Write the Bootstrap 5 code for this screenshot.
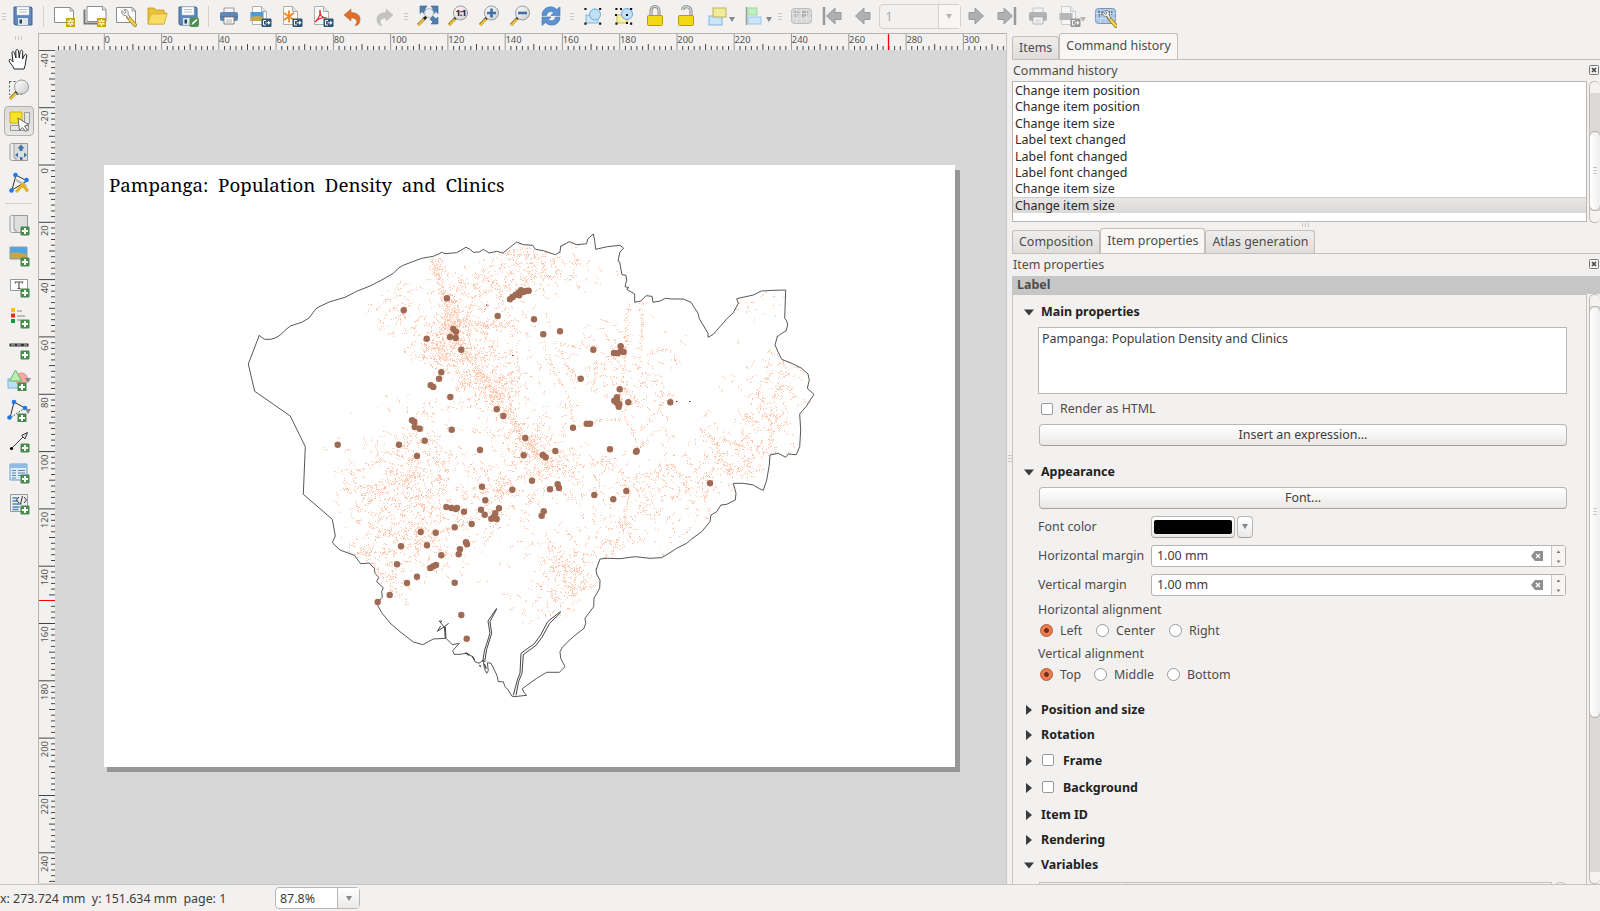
<!DOCTYPE html>
<html lang="en">
<head>
<meta charset="utf-8">
<title>Composer</title>
<link href="https://cdn.jsdelivr.net/npm/bootstrap@5.3.0/dist/css/bootstrap.min.css" rel="stylesheet">
<style>
body{font-family:"Noto Sans","Open Sans",sans-serif;font-size:12.45px;line-height:16px;color:#4c4c4c;background:#f2f1f0;width:1600px;height:911px;overflow:hidden}
svg{display:block;flex:none}
.topbar{height:33px}
.slot{width:31px;height:33px;flex:none;display:flex;align-items:center;justify-content:center}
.topbar .slot{padding-bottom:1px}
.off{opacity:.55;filter:grayscale(1)}
.vsep{width:10px;flex:none;display:flex;justify-content:center}
.vsep::after{content:"";width:1px;height:21px;background:#d2d0ce}
.grip{flex:none;display:flex;align-items:center;justify-content:center}
.grip::after{content:"";width:4px;height:8px;background:repeating-linear-gradient(#c9c7c5 0 1px,transparent 1px 3px)}
.grip.across::after{width:8px;height:4px;background:repeating-linear-gradient(90deg,#c9c7c5 0 1px,transparent 1px 3px)}
.tri{width:0;height:0;border:3.5px solid transparent;border-top:5px solid #888;border-bottom:0;flex:none}
.pagebox{width:82px;height:25px;border:1px solid #d2d0ce;border-radius:4px;color:#a9a7a5;flex:none}
.pagebox .dd{width:22px;border-left:1px solid #d2d0ce;background:#f7f6f5}
.sidebar{width:38px}
.sidebar .slot{width:37px;height:31px}
.sidebar .picked{width:30px;height:30px;border:1px solid #b3b1ae;border-radius:4px;background:linear-gradient(#dcdbd9,#e8e7e5)}
.view{width:968px;background:#d7d7d7}
.sheet{width:851px;height:602px;background:#fff;margin:115px 0 0 49px;box-shadow:3px 5px 0 0 #969696,5px 5px 0 0 #969696}
.rule-x{height:17px;border-top:1px solid #b5b3b0;border-left:1px solid #b5b3b0;background:#f2f1f0}
.rule-y{width:17px;border-left:1px solid #b5b3b0;background:#f2f1f0}
.maptitle{font-family:"Noto Serif","Liberation Serif",serif;font-size:18.7px;word-spacing:4.8px;line-height:24px;color:#000;padding:8px 0 0 5px;white-space:nowrap;height:33px}
.split{width:6px;border-left:1px solid #c9c7c5}
.tabs .nav-link{padding:0 6px;border:1px solid #c2bfbc;border-bottom:0;border-radius:3px 3px 0 0;height:23px;line-height:21px;color:#4c4c4c;background:linear-gradient(#efeeed,#dfdddb);margin:0;white-space:nowrap;font-size:12.45px}
.tabs .nav-link.active{height:26px;line-height:24px;background:#f8f7f6;color:#4c4c4c;border-color:#c2bfbc}
.tabs{border-bottom:1px solid #c2bfbc;flex-wrap:nowrap}
.hist{width:575px;height:141px;border:1px solid #b9b6b3;background:#fff;color:#222}
.hist .list-group-item{border:0;padding:0 2px;height:16.45px;line-height:18px;background:none;color:#2a2a2a}
.hist .list-group-item.now{background:linear-gradient(#e9e8e7,#dad9d8);border-top:1px solid #cfcdcb;line-height:16px}
.sbar{width:11px;border:1px solid #bcb9b6;border-radius:6px;background:#dcdad8;overflow:hidden;border-right:0}
.sbar .knob{background:linear-gradient(90deg,#fff,#efeeed);border:1px solid #b0adaa;border-radius:6px;margin:0 -1px}
.sbar .end{height:11px;background:#f4f3f2;flex:none}
.kind{height:18px;background:#c6c6c6;font-weight:700;line-height:18px;padding-left:5px}
.props{width:575px;border:1px solid #c6c3c0;border-bottom:0;overflow:hidden}
.sect{font-weight:700;color:#222;height:20px;display:flex;align-items:center;padding-left:11px}
.sect svg{margin-right:7px}
.btn.flat{height:22px;width:528px;padding:0;font-size:12.45px;line-height:20px;color:#3c3c3c;border:1px solid #b9b6b3;border-bottom-color:#a5a29f;border-radius:4px;background:linear-gradient(#fff,#f6f5f5 50%,#e9e8e7)}
.btn.swatch{width:auto;display:flex;align-items:center;justify-content:center}
.memo{width:529px;height:67px;border:1px solid #bbb8b5;background:#fff;padding:3px 3px;color:#3c3c3c}
.form-check-input.ck{width:12px;height:12px;margin:0;border:1px solid #999;border-radius:2px;background-color:#fff;flex:none}
.form-check-input.rd{width:13px;height:13px;margin:0;border:1px solid #999;background-color:#fff;flex:none}
.form-check-input.rd:checked{background:radial-gradient(circle,#6b3018 0 2px,#ee7c52 2.8px);border-color:#b3532c}
.sect .ck{margin:-1px 9px 0 1px}
.line{display:flex;align-items:center;margin-left:25px}
.spin{width:415px;height:22px;border:1px solid #b5b2af;border-radius:3px;background:#fff;color:#3c3c3c}
.spin .ud{width:14px;border-left:1px solid #c9c7c5;background:#f6f5f4}
.status{height:27px;border-top:1px solid #c6c3c0;color:#3c3c3c}
.zoombox{width:85px;height:22px;border:1px solid #b9b6b3;border-radius:4px;background:#fff}
.zoombox .dd{width:22px;border-left:1px solid #b9b6b3;background:linear-gradient(#fff,#ebeae9)}
</style>
</head>
<body class="d-flex flex-column">
<svg width="0" height="0" class="position-absolute">
<defs>
<linearGradient id="gm" x1="0" y1="0" x2="1" y2="1"><stop offset="0" stop-color="#fff"/><stop offset="1" stop-color="#ccc"/></linearGradient>
<symbol id="disk" viewBox="0 0 24 24"><path d="M3 3h17l1 1v17H4l-1-1z" fill="#5f88b8" stroke="#3f6494"/><path d="M6 3h12v8H6z" fill="#fff" stroke="#b9c6d6" stroke-width=".6"/><path d="M8 5.500h8M8 8h8" stroke="#bbb"/><path d="M7 14h10v7H7z" fill="#e4e6e8"/><path d="M8.500 15.500h2.500v4h-2.500z" fill="#23456e"/></symbol>
<symbol id="sheet" viewBox="0 0 24 24"><path d="M2.500 3.500h16l3 3v12h-19z" fill="#fff" stroke="#8c8c8c"/><path d="M18 3.500v3.500h3.500" fill="#ddd" stroke="#999"/></symbol>
<symbol id="star" viewBox="0 0 24 24"><path d="M14 14h9v9h-9z" fill="#c9a400"/><path d="M18.500 15v7M15.500 16.700l6 3.600M21.500 16.700l-6 3.600" stroke="#fff" stroke-width="1.500"/><circle cx="18.500" cy="18.500" r="1" fill="#c9a400"/></symbol>
<symbol id="plus" viewBox="0 0 24 24"><rect x="13.500" y="14.500" width="9" height="9" rx="1" fill="#468a4c"/><path d="M18 16v6M15 19h6" stroke="#fff" stroke-width="2"/></symbol>
<symbol id="out" viewBox="0 0 24 24"><rect x="13.500" y="14.500" width="10" height="8.500" rx="1" fill="#2f5571"/><path d="M18 16.500h-2.500v4.500H18M17.500 18.800h3" stroke="#fff" fill="none"/><path d="M20 16.500l2.500 2.300-2.500 2.300z" fill="#fff"/></symbol>
<symbol id="doc" viewBox="0 0 24 24"><path d="M4.500 2.500h9l5 5v13h-14z" fill="#fbfbfb" stroke="#b0b0b0"/><path d="M13.500 2.500v5h5" fill="#e3e3e3" stroke="#aaa"/></symbol>
<symbol id="wrench" viewBox="0 0 24 24"><path d="M14 13l7 8" stroke="#a08420" stroke-width="4" stroke-linecap="round"/><path d="M14 13l7 8" stroke="#f0d850" stroke-width="2.200" stroke-linecap="round"/><path d="M8 6.500c-1 3 1 5.500 4 5l2.500 3 1.500-1.500-2-3c1-3-1-5-4-4.500l2 2.500-1.500 1.500z" fill="#eee" stroke="#777" stroke-width=".8"/></symbol>
<symbol id="folder" viewBox="0 0 24 24"><path d="M3 20V4h6l2 2h8v3h3l-3 11z" fill="#e9c13a" stroke="#c39b20" stroke-width=".8"/><path d="M3 20l3-10h16l-3 10z" fill="#f9dc63" stroke="#d4ad30" stroke-width=".7"/></symbol>
<symbol id="printer" viewBox="0 0 24 24"><path d="M7 4h10v6H7z" fill="#f4f4f4" stroke="#888" stroke-width=".8"/><rect x="3" y="8" width="18" height="9" rx="2" fill="#5f88b8"/><path d="M3.500 13h17" stroke="#42689a"/><path d="M7 13h10v7H7z" fill="#fff" stroke="#777" stroke-width=".9"/><path d="M9 16h6M9 18h6" stroke="#999" stroke-width=".8"/></symbol>
<symbol id="undo" viewBox="0 0 24 24"><path d="M3 11l7-6v3.500c8 0 11 5 8 11-1 1.500-2 2-4 2 4-4 1-8-4-7.500V17z" fill="#dd6f2c" stroke="#c05a1b" stroke-width=".5"/></symbol>
<symbol id="lens" viewBox="0 0 24 24"><path d="M10 13.500l-7 7.500" stroke="#8d7625" stroke-width="3"/><path d="M9 15l-6 6.500" stroke="#f6c93e" stroke-width="1.800"/><path d="M11 12.500l-2 2.500" stroke="#222" stroke-width="2.800"/><circle cx="14.500" cy="9" r="7" fill="url(#gm)" stroke="#9a9a9a"/></symbol>
<symbol id="lock" viewBox="0 0 24 24"><path d="M8 12V7c0-6 8-6 8 0v5" fill="none" stroke="#888" stroke-width="3"/><path d="M8 12V7c0-6 8-6 8 0v5" fill="none" stroke="#ddd" stroke-width="1.200"/><rect x="4.500" y="11.500" width="15" height="10" rx="1" fill="#f2d916" stroke="#b99c0a"/></symbol>
<symbol id="unlock" viewBox="0 0 24 24"><path d="M8.500 6c1-5 8.500-4 8.500 1.500V12" fill="none" stroke="#888" stroke-width="3"/><path d="M8.500 6c1-5 8.500-4 8.500 1.500V12" fill="none" stroke="#ddd" stroke-width="1.200"/><rect x="4.500" y="11.500" width="15" height="10" rx="1" fill="#f2d916" stroke="#b99c0a"/></symbol>
<symbol id="arr" viewBox="0 0 24 24"><path d="M4.500 12l8.500-8v4.500h6v7h-6v4.500z" fill="#b0b0b0" stroke="#9b9b9b"/></symbol>
<symbol id="corners" viewBox="0 0 24 24"><path d="M4 4h2v2H4zM18 4h2v2h-2zM4 18h2v2H4zM18 18h2v2h-2z" fill="#111" transform="translate(-.8 -.3) scale(1.050)"/></symbol>
<symbol id="world" viewBox="0 0 24 24"><rect x="2.500" y="4.500" width="20" height="15" rx="3" fill="#aac6e8" stroke="#7d94b5"/><path d="M5 7l3-.5 1 1.500 2-.5-1 3-2 1 0 4-2-3zM13 7h6l1 3-2 1-1 2-2-2-1 4-2-4z" fill="#66788f"/><path d="M2.500 9.500h20M2.500 14.500h20M7.500 5v14M12.500 5v14M17.500 5v14" stroke="#d4e2f3" stroke-width=".8"/></symbol>
<symbol id="roll" viewBox="0 0 24 24"><path d="M5.500 3.500h15v17h-12" fill="#dedede" stroke="#999"/><path d="M3 5.500c0-3 4-3 4 0v12.500h2v2.500H5.500c-2 0-2.500-1-2.500-2z" fill="#eee" stroke="#999"/></symbol>
</defs>
</svg>

<header class="topbar d-flex align-items-center" id="topbar"></header>

<main class="d-flex flex-grow-1" style="min-height:0">
<aside class="sidebar d-flex flex-column" id="sidebar"></aside>

<section class="view d-flex flex-column">
 <svg class="rule-x" id="rx" width="968" height="17"></svg>
 <div class="d-flex flex-grow-1">
  <svg class="rule-y" id="ry" width="17" height="833"></svg>
  <div>
   <div class="sheet">
    <div class="maptitle">Pampanga: Population Density and Clinics</div>
    <svg id="map" width="851" height="565" viewBox="104 198 851 565"></svg>
   </div>
  </div>
 </div>
</section>

<div class="split d-flex"><div class="grip" style="width:5px"></div></div>

<section class="d-flex flex-column" style="width:588px">
 <ul class="nav tabs align-items-end" style="height:27px">
  <li><a class="nav-link">Items</a></li><li><a class="nav-link active">Command history</a></li>
 </ul>
 <div class="d-flex align-items-center justify-content-between" style="height:21px;padding:1px 0 0 1px"><span>Command history</span><svg width="11" height="11" viewBox="0 0 11 11"><rect x=".5" y=".5" width="9" height="9" rx="1" fill="none" stroke="#777"/><path d="M3 3l4 4M7 3l-4 4" stroke="#444" stroke-width="1.600"/></svg></div>
 <div class="d-flex">
  <div class="hist list-group rounded-0">
   <div class="list-group-item">Change item position</div><div class="list-group-item">Change item position</div><div class="list-group-item">Change item size</div><div class="list-group-item">Label text changed</div><div class="list-group-item">Label font changed</div><div class="list-group-item">Label font changed</div><div class="list-group-item">Change item size</div><div class="list-group-item now">Change item size</div>
  </div>
  <div class="sbar d-flex flex-column ms-auto"><div class="end"></div><div style="height:38px"></div><div class="knob d-flex justify-content-center grip" style="height:80px"></div><div class="end"></div></div>
 </div>
 <div class="grip across" style="height:5px;width:588px"></div>
 <ul class="nav tabs align-items-end" style="height:26px">
  <li><a class="nav-link">Composition</a></li><li><a class="nav-link active" style="height:25px">Item properties</a></li><li><a class="nav-link">Atlas generation</a></li>
 </ul>
 <div class="d-flex align-items-center justify-content-between" style="height:22px;padding-left:1px"><span>Item properties</span><svg width="11" height="11" viewBox="0 0 11 11"><rect x=".5" y=".5" width="9" height="9" rx="1" fill="none" stroke="#777"/><path d="M3 3l4 4M7 3l-4 4" stroke="#444" stroke-width="1.600"/></svg></div>
 <div class="kind">Label</div>
 <div class="d-flex flex-grow-1" style="min-height:0">
  <div class="props" id="props">
   <div class="sect down" style="margin-top:7px">Main properties</div>
   <div class="memo" style="margin:5px 0 0 25px">Pampanga: Population Density and Clinics</div>
   <div class="line" style="margin-top:6px;height:18px;padding-left:3px"><input type="checkbox" class="form-check-input ck"><span style="margin-left:7px">Render as HTML</span></div>
   <button class="btn flat d-block" style="margin:6px 0 0 26px">Insert an expression...</button>
   <div class="sect down" style="margin-top:16px">Appearance</div>
   <button class="btn flat d-block" style="margin:5px 0 0 26px">Font...</button>
   <div class="line" style="margin-top:7px;height:22px"><span style="width:113px">Font color</span><span class="btn flat swatch" style="width:84px"><span style="width:78px;height:14px;background:#000;border-radius:2px"></span></span><span class="btn flat swatch" style="width:16px;margin-left:2px"><i class="tri"></i></span></div>
   <div class="line" style="margin-top:7px;height:22px"><span style="width:113px">Horizontal margin</span><div class="spin d-flex align-items-center" data-v="1.00 mm"></div></div>
   <div class="line" style="margin-top:7px;height:22px"><span style="width:113px">Vertical margin</span><div class="spin d-flex align-items-center" data-v="1.00 mm"></div></div>
   <div class="line" style="margin-top:5px;height:18px">Horizontal alignment</div>
   <div class="line" style="margin-top:2px;height:20px;padding-left:2px"><input type="radio" class="form-check-input rd" checked><span style="width:36px;margin-left:7px">Left</span><input type="radio" class="form-check-input rd"><span style="width:53px;margin-left:7px">Center</span><input type="radio" class="form-check-input rd"><span style="margin-left:7px">Right</span></div>
   <div class="line" style="margin-top:4px;height:18px">Vertical alignment</div>
   <div class="line" style="margin-top:2px;height:20px;padding-left:2px"><input type="radio" class="form-check-input rd" checked><span style="width:34px;margin-left:7px">Top</span><input type="radio" class="form-check-input rd"><span style="width:53px;margin-left:7px">Middle</span><input type="radio" class="form-check-input rd"><span style="margin-left:7px">Bottom</span></div>
   <div class="sect" style="margin-top:15px">Position and size</div>
   <div class="sect" style="margin-top:5px">Rotation</div>
   <div class="sect" style="margin-top:6px"><input type="checkbox" class="form-check-input ck">Frame</div>
   <div class="sect" style="margin-top:7px"><input type="checkbox" class="form-check-input ck">Background</div>
   <div class="sect" style="margin-top:7px">Item ID</div>
   <div class="sect" style="margin-top:5px">Rendering</div>
   <div class="sect down" style="margin-top:5px">Variables</div>
   <div class="d-flex" style="margin:7px 0 0 26px"><div style="width:513px;height:9px;border:1px solid #c2bfbc"><div style="width:87px;height:9px;border-right:1px solid #c2bfbc"></div></div><div style="width:11px;height:9px;margin-left:3px;border:1px solid #bcb9b6;border-radius:6px"></div></div>
  </div>
  <div class="sbar d-flex flex-column ms-auto"><div class="end"></div><div class="knob grip" style="height:412px"></div><div class="flex-grow-1"></div><div class="end"></div></div>
 </div>
</section>
</main>

<footer class="status d-flex align-items-center"><span style="width:275px;white-space:pre;letter-spacing:-.02px;padding-top:2px">x: 273.724 mm  y: 151.634 mm  page: 1</span>
<div class="zoombox d-flex"><span class="flex-grow-1 ps-1" style="line-height:21px">87.8%</span><span class="dd d-flex align-items-center justify-content-center"><i class="tri"></i></span></div></footer>

<script>
const S=(inner,c='')=>`<svg class="${c}" width="24" height="24" viewBox="0 0 24 24">${inner}</svg>`;
const U=id=>`<use href="#${id}"/>`;
const slot=(inner,c='')=>`<div class="slot ${c}">${S(inner)}</div>`;
const wide=(inner,w,c='')=>`<div class="slot ${c}" style="width:${w}px">${S(inner)}<i class="tri" style="margin-left:-1px;margin-top:7px"></i></div>`;
const grip=w=>`<div class="grip" style="width:${w}px"></div>`;
const sep='<div class="vsep"></div>';
const flip=t=>`<g transform="translate(24 0) scale(-1 1)">${t}</g>`;
const nodes='<path d="M5 20L9 4l11 6" fill="none" stroke="#333"/><path d="M20 10L5 20" stroke="#333" stroke-dasharray="1.500 1.500"/><g fill="#1f78f0"><circle cx="9" cy="4" r="2.300"/><circle cx="20" cy="10" r="2.300"/><circle cx="4.500" cy="19.500" r="2.300"/></g>';
const photo='<path d="M3 4h17v12H3z" fill="#4ea5e6" stroke="#999"/><path d="M3.500 10c5-2 10 0 16 1v4.500h-16z" fill="#c5a648"/>';
document.getElementById('topbar').innerHTML=[
 grip(7.5),slot(U('disk')),sep,slot(U('sheet')+U('star')),
 slot('<path d="M1.500 5.500v14h14" fill="none" stroke="#777" stroke-width="2"/><g transform="translate(1.500 -1)">'+U('sheet')+'</g>'+U('star')),
 slot(U('sheet')+U('wrench')),slot(U('folder')),
 slot(U('disk')+'<rect x="13.500" y="13.500" width="9.500" height="9.500" rx="2" fill="#4f8f56"/><path d="M15.500 21l1-2.500 4-3.500 1 1-4 4z" fill="#fff"/>'),sep,
 slot(U('printer')),
 slot(U('doc')+'<path d="M2.500 8h13v9h-13z" fill="#4a9bd8"/><path d="M2.500 14c4-3 8-2 13-1v4h-13z" fill="#c5a648"/>'+U('out')),
 slot(U('doc')+'<path d="M10 6.500v12M5 9l10 7M15 9l-10 7" stroke="#f08a1c" stroke-width="1.800"/>'+U('out')),
 slot(U('doc')+'<path d="M5 18c4-4 6-8 5-12-1 5 2 8 7 8-5-1-9 1-12 4z" fill="none" stroke="#e02020" stroke-width="1.200"/>'+U('out')),
 slot(U('undo')),slot(`<g opacity=".75">${flip(U('undo'))}</g>`,'off'),grip(12),
 slot('<path d="M6 3h17v17H6z" fill="#eee"/><path d="M5 2h7l-2 2.500 3 3-3 3-3-3-2 2zM23 2h-7l2 2.500-3 3 3 3 3-3 2 2zM23 20h-7l2-2-3-3 3-3 3 3 2-2z" fill="#4f7fb0" stroke="#34608e" stroke-width=".6"/><path d="M10 14l-7 7" stroke="#8d7625" stroke-width="3"/><path d="M9 15l-6 6.500" stroke="#f6c93e" stroke-width="1.800"/><path d="M11.500 12.500L9 15" stroke="#222" stroke-width="2.800"/><circle cx="14" cy="9" r="4.500" fill="#e8edf2" stroke="#bbb"/>'),
 slot(U('lens')+'<text x="14.600" y="12.200" font-size="9" font-weight="700" fill="#222" text-anchor="middle" letter-spacing="-.8">1:1</text>'),
 slot(U('lens')+'<path d="M14.500 4.500v9M10 9h9" stroke="#3e6fa8" stroke-width="2.600"/>'),
 slot(U('lens')+'<path d="M10 9h9" stroke="#3e6fa8" stroke-width="2.600"/>'),
 slot('<path d="M3 11.500c0-9 11-11 14.500-6L21 3v8.500h-9l2.500-2.700C12 6 8 8 7.500 11.500z" fill="#5c92cf" stroke="#3f73b3" stroke-width=".6"/><path d="M21 13c0 9-11 10-14.500 5.500L3 21.500V13h9l-2.500 2.700C12 18 16 16.500 16.500 13z" fill="#5c92cf" stroke="#3f73b3" stroke-width=".6"/>'),grip(11),
 slot('<rect x="5" y="11" width="12" height="8" fill="#cbe5f8" stroke="#82b3d8"/><circle cx="14" cy="10.500" r="5.500" fill="#bfe0f6" stroke="#6ca6d4"/>'+U('corners')),
 slot('<rect x="5" y="11" width="10" height="8" fill="#f6f0a0" stroke="#c9bf60"/><circle cx="15" cy="10" r="5.500" fill="#bfe0f6" stroke="#6ca6d4"/><path d="M3 10h2v2H3zM14 10h2v2h-2zM8 4h2v2H8zM14 18h2v2h-2z" fill="#111"/>'+U('corners')),
 slot(U('lock')),slot(U('unlock')),
 wide('<rect x="3" y="12" width="13" height="9" fill="#cbe5f8" stroke="#82b3d8"/><rect x="7" y="4" width="13" height="9" fill="#f2eb98" stroke="#b9b060"/>',37.5),
 wide('<path d="M3.500 3v18" stroke="#999" stroke-width="1.500"/><rect x="5" y="4" width="9" height="7" fill="#bdf2bd" stroke="#9fd49f"/><rect x="5" y="13" width="13" height="7" fill="#cbe5f8" stroke="#9cc4e0"/>',36),grip(10.5),
 slot(U('world'),'off'),
 slot('<g transform="translate(2 0)">'+U('arr')+'</g><path d="M4 3v18" stroke="#999" stroke-width="2.500"/>'),slot(U('arr')),
 '<div class="pagebox d-flex"><span class="flex-grow-1" style="line-height:23px;padding-left:6px">1</span><span class="dd d-flex align-items-center justify-content-center"><i class="tri" style="opacity:.6"></i></span></div>',
 slot(flip(U('arr'))),slot('<g transform="translate(-2 0)">'+flip(U('arr'))+'</g><path d="M20 3v18" stroke="#999" stroke-width="2.500"/>'),
 slot(U('printer'),'off'),wide(U('doc')+'<path d="M2.500 9h13v7h-13z" fill="#888"/>'+U('out'),36,'off'),
 slot(U('world')+'<g transform="translate(2 1)">'+U('wrench')+'</g>')].join('');

const plus=U('plus');
const small=(inner,c)=>`<div class="slot">${S(inner,c||'')}</div>`;
const drop=inner=>`<div class="slot" style="position:relative">${S(inner)}<i class="tri" style="position:absolute;left:25px;top:15px"></i></div>`;
document.getElementById('sidebar').innerHTML=[
 '<div class="grip across" style="height:10px"></div>',
 small('<path d="M7 22c-1-4-5-6-5-9 1-1.500 3 0 4 2L5 6c0-2 2-2 2.500 0L9 11 8.800 4c0-2 2.400-2 2.700 0l.7 7 1-6.500c.5-2 2.600-1.500 2.500.5L15.500 12l2-4c1-1.500 2.700-.5 2.200 1-1.200 4-.7 8-2.700 13z" fill="#fff" stroke="#222"/>'),
 small('<path d="M2.500 3.500h12v13h-12z" fill="none" stroke="#555" stroke-dasharray="2 2"/>'+U('lens')),
 `<div class="slot"><div class="picked d-flex align-items-center justify-content-center">${S('<path d="M3 3h12v11H3z" fill="#f7e32a" stroke="#c9b40a"/><path d="M17.500 3.500h5v11h-5zM3.500 16.500h18v5h-18z" fill="#e6e6e6" stroke="#999"/><path d="M11 9l11 7-4.500 1 3 4-2 1.500-3-4-3 3z" fill="#fff" stroke="#666"/>')}</div></div>`,
 small(U('roll')+'<path d="M14 4.500l3.500 4h-2V11h-3V8.500h-2zM8 15l3-2.500v5zM20 15l-3-2.500v5zM13 17h2.500v3H13z" fill="#3f73a8"/>'),
 small('<path d="M5 19L9 4l11 6z" fill="none" stroke="#333"/><path d="M9 9l9 5 2 7" fill="none" stroke="#bbb" stroke-width="2.500"/><path d="M17 12l-6 7-2 2M15 14l6 6" stroke="#e2b420" stroke-width="3" fill="none"/><g fill="#1f78f0"><circle cx="8.500" cy="4" r="2.300"/><circle cx="19.500" cy="9" r="2.300"/><circle cx="4.500" cy="19.500" r="2.300"/></g>'),
 '<div style="height:10px;display:flex;align-items:center"><div style="width:27px;height:1px;background:#d2d0ce;margin-left:5px"></div></div>',
 small(U('roll')+plus),small(photo+plus),
 small('<path d="M3.500 5.500h17v11h-17z" fill="#fff" stroke="#999"/><path d="M8.500 9.500V8h7v1.500M12 8v6.500M10.500 14.500h3" fill="none" stroke="#555" stroke-width="1.200"/>'+plus),
 small('<path d="M4 3h4v4H4z" fill="#fbbf1c"/><path d="M4 8.500h4v4H4z" fill="#e03412"/><path d="M4 14h4v4H4z" fill="#0b9a3a"/><path d="M10 6h5M10 11h8M10 15h4" stroke="#888"/>'+plus),
 small('<path d="M2.500 9h19" stroke="#333" stroke-width="3"/><path d="M4 9h4M10 9h4M17 9h3" stroke="#ccc"/>'+plus),
 drop('<rect x="1" y="12" width="13" height="9" fill="#bfe0f6" stroke="#7db2da"/><circle cx="14.500" cy="12" r="6" fill="#f3a9a4" stroke="#e08a85"/><path d="M8.500 3l6 11h-12z" fill="#b9f0b0" stroke="#63b860"/><g transform="translate(-3 1)">'+plus+'</g>'),
 drop('<g transform="translate(-2 0)">'+nodes+'</g><g transform="translate(-3 1)">'+plus+'</g>'),
 small('<path d="M5 19L19 5" stroke="#444"/><path d="M20.500 3.500l-6 3 3.500 3.500z" fill="#ddd" stroke="#333"/><circle cx="4.500" cy="19.500" r="1.600" fill="#000"/>'+plus),
 small('<path d="M3 4h17v16H3z" fill="#dceafa" stroke="#6f9cc9"/><path d="M3 4h17v4H3z" fill="#8fbce6"/><path d="M5 10.500h4M11 10.500h7M5 13h4M11 13h7M5 15.500h4M11 15.500h5M5 18h4" stroke="#5b86b5"/>'+plus),
 small('<path d="M3.500 3.500h17v17h-17z" fill="#eee" stroke="#999"/><path d="M5.500 7h5M5.500 10h5M5.500 13h9M5.500 16h7M5.500 18.500h6" stroke="#4f84bf" stroke-width="1.400"/><path d="M12 6l-2.500 3 2.500 3M17 6l2.500 3-2.500 3M15.500 5l-2 8" fill="none" stroke="#333"/>'+plus)].join('');

document.querySelectorAll('.sect').forEach(e=>e.insertAdjacentHTML('afterbegin',`<svg width="10" height="10" viewBox="0 0 10 10"><path d="${e.classList.contains('down')?'M0 2.500h10L5 8.500z':'M2 0v10l6-5z'}" fill="#3a3a3a"/></svg>`));
document.querySelectorAll('.spin').forEach(e=>e.innerHTML=`<span class="flex-grow-1" style="padding-left:5px">${e.dataset.v}</span><svg width="12" height="10" viewBox="0 0 12 10" style="margin-right:8px"><path d="M4 0h8v10H4L0 5z" fill="#8e8e8e"/><path d="M5 3l4 4M9 3L5 7" stroke="#fff" stroke-width="1.200"/></svg><span class="ud align-self-stretch"><svg width="13" height="20"><path d="M4.500 7h4l-2-2.500zM4.500 14.500h4l-2 2.500z" fill="#777"/></svg></span>`);

/* rulers: one tick per 2 mm, labels every 20 mm */
const K=2.8634;let h='',v='';
for(let m=-16;m<=314;m+=2){const x=(104.3-39+m*K).toFixed(1),big=m%20===0,mid=m%10===0;
 h+=`<path d="M${x} ${big?0:mid?10:12}V16" stroke="${big?'#999':'#444'}"/>`;
 if(big)h+=`<text x="${+x+.3}" y="8.600">${m}</text>`}
h+='<path d="M849.500 0V16" stroke="red" stroke-width="1.300"/><path d="M0 16.500h16" stroke="#444"/>';
for(let m=-40;m<=250;m+=2){const y=(165-50+m*K*1.0008).toFixed(1),big=m%20===0,mid=m%10===0;
 v+=`<path d="M${big?0:mid?10:12} ${y}H16" stroke="#444"/>`;
 if(big)v+=`<text transform="translate(8.500 ${+y+3}) rotate(-90)" text-anchor="end">${m}</text>`}
v+='<path d="M0 550.500H16" stroke="red"/>';
const T='<g font-size="9.400" fill="#555" stroke-width="1">';
document.getElementById('rx').innerHTML=T+h+'</g>';document.getElementById('ry').innerHTML=T+v+'</g>';

/* province outline, traced in three sections at a third of a pixel */
const pts=(ox,oy,s)=>{const n=s.trim().split(/[ ,]+/).map(Number),o=[];for(let i=0;i<n.length;i+=2)o.push([ox+n[i]/3,oy+n[i+1]/3]);return o};
const outline=[...pts(230,220,'226 680 181 588 74 514 55 432 88 346 103 358 122 358 135 354 150 346 165 331 181 318 215 307 237 294 250 277 258 266 270 259 300 245 345 232 380 214 420 198 455 180 490 160 505 145 517 137 545 126 575 115 610 109 637 97 645 101 680 98 708 82 720 88 730 97 748 96 760 88 778 99 800 94 818 99 835 86 860 66'),
...pts(520,220,'10 74 38 76 46 88 70 92 84 97 106 104 120 96 122 78 135 72 148 65 170 74 200 71 203 57 220 42 224 62 227 88 262 80 300 76 311 85 300 95 294 123 299 126 303 150 306 164 318 166 320 180 315 200 326 203 320 208 344 222 344 247 362 243 378 227 396 229 399 247 420 243 436 235 455 237 490 237 513 247 534 280 538 296 564 340 564 352 580 343 622 295 640 278 655 250 650 236 700 225 724 213 760 211 797 210 794 295 800 303 803 315 798 333 785 340 772 350 765 375 774 395 785 418 815 430 845 445 864 462 868 480 862 505 882 523 858 560 839 582 842 630 839 680 829 704 805 702 797 712 775 700 750 705 748 735 740 780 730 811 718 806 700 795 670 790 640 790 648 820 646 840 620 853 603 855 590 875 573 885 570 905 545 935 515 957 500 970 470 985 450 998 425 1013 390 1015 345 1010 300 1016 262 1015'),
...pts(290,460,'930 297 918 330 921 345 930 360 929 385 912 415 911 440 885 475 887 490 882 505 850 530 818 560 810 575 812 595 825 620 808 637 770 637 740 655 697 686 702 698 710 706 672 710 665 708 655 690 645 680 640 665 625 665 622 650 618 640 603 610 592 608 595 632 590 640 583 625 580 600 567 610 555 605 548 590 530 580 510 583 492 583 488 572 508 550 487 554 468 535 430 537 398 554 370 546 330 515 300 489 275 458 263 436 263 426 277 412 275 395 280 383 260 365 266 352 255 340 253 325 238 309 212 311 193 286 150 270 127 248 136 228 127 178 40 103')];
const d=outline.map((p,i)=>(i?'L':'M')+p[0].toFixed(1)+' '+p[1].toFixed(1)).join('')+'Z';
let seed=7;const R=()=>((seed=(seed*1664525+1013904223)>>>0)/4294967296),G=()=>(R()+R()+R()+R()-2)*1.15;
let dots=['',''];const put=(x,y)=>dots[R()<.55?0:1]+=`M${Math.round(x)} ${Math.round(y)+.5}h1`;
/* built-up areas: x, y, spread x, spread y, number of short pixel trails */
[[455,325,20,30,190],[475,370,28,28,200],[435,350,20,16,110],[450,310,6,22,70],[437,268,6,12,30],[490,285,35,16,110],[515,255,35,14,70],[500,330,40,22,70],[540,265,28,22,90],[402,310,24,24,75],[500,385,24,20,110],[528,445,22,24,120],[545,460,30,16,60],[415,465,44,26,130],[395,500,44,34,200],[390,545,42,24,130],[460,500,55,30,130],[440,540,34,25,70],[500,490,25,18,60],[560,470,34,28,100],[385,580,24,16,45],[563,582,20,26,105],[575,560,30,20,60],[620,530,28,30,85],[640,480,34,24,75],[685,495,34,34,110],[720,470,26,22,75],[745,450,22,28,65],[768,430,22,30,60],[772,390,26,24,75],[785,365,16,22,30],[745,300,28,18,32],[772,412,6,6,16],[715,440,30,18,35],[620,355,22,34,60],[580,370,40,36,65],[655,380,22,28,35],[480,430,55,45,70],[370,470,30,34,30],[540,600,40,30,25],[655,350,25,40,25],[575,270,22,18,30],[520,530,65,50,50],[420,420,34,22,30]]
.forEach(([x,y,a,b,n])=>{for(let i=0;i<n;i++){let cx=x+G()*a,cy=y+G()*b;const k=1+R()*4,t=R()*6.28;for(let j=0;j<k;j++){put(cx,cy);cx+=Math.cos(t)*1.3+R()*2-1;cy+=Math.sin(t)*1.3+R()*2-1}}});
/* settlement strips along roads */
const strips=(w,f,list)=>list.forEach(s=>{const n=s.split(' ').map(Number);for(let i=0;i+3<n.length;i+=2){const L=Math.hypot(n[i+2]-n[i],n[i+3]-n[i+1]);for(let k=0;k<L*f;k++){const t=R();put(n[i]+(n[i+2]-n[i])*t+G()*w,n[i+1]+(n[i+3]-n[i+1])*t+G()*w)}}});
strips(3,3,['433 262 440 285 447 310 452 330 470 360 490 385 505 410 525 440 545 465','450 325 480 324 510 325']);
strips(1.6,1,['545 345 555 375 568 395 572 420 573 428','555 343 580 347 595 345 596 370 590 395','628 300 625 345 624 370 620 385 622 410 632 430 637 450','637 450 650 435 665 428 668 440','622 385 640 402 625 402','645 355 665 350 672 350','660 383 664 400 655 415 640 430','573 428 600 420 620 418','560 355 575 375 582 380','590 465 605 460 620 468 628 490 625 520 610 560 600 590','640 478 670 465 680 475 690 495','700 430 715 440 725 465','770 420 770 460 772 480','745 415 770 430 790 421','520 375 508 395 515 420 505 440','355 553 400 550 440 530 470 520 500 490 510 480','370 560 395 590 408 605','340 490 370 485 400 480 430 475 450 480','425 430 438 455 445 470','768 350 790 362 805 372','640 300 642 330 640 350','550 568 562 566 575 580 570 590 595 585','485 545 495 525 500 515','355 500 362 520 385 535 410 530','405 475 410 500 400 515']);
const clinics=[...pts(230,220,'651 235 521 271 803 288 590 356 670 327 678 335 660 351 677 354 694 389 634 457 627 476 602 496 610 501 661 531 800 568 820 588 546 601 553 605 554 621 569 626 665 629 584 662 507 674 323 674 561 708 750 690 886 654 881 706 840 238 848 231 857 224 866 218 873 211 880 216 888 213 896 212 868 226'),
...pts(520,220,'42 298 70 343 120 334 220 389 302 379 282 399 293 400 303 394 311 396 182 476 299 508 325 547 451 547 291 532 283 542 290 548 298 552 291 539 296 560 159 623 200 611 210 611 106 693 68 705 77 712 270 688 350 693 348 695 36 782 319 813 570 790 280 838'),
...pts(290,460,'576 80 667 89 780 88 803 73 807 84 913 105 586 121 469 141 484 144 497 147 501 144 522 155 573 149 584 164 627 145 616 160 604 176 620 177 612 170 761 154 755 167 545 192 494 202 392 216 437 218 411 256 333 259 528 247 531 253 510 268 506 283 454 286 421 324 430 319 438 315 321 313 381 350 351 369 494 368 299 405 263 426 514 465 530 536')];
document.getElementById('map').innerHTML=`<clipPath id="land"><path d="${d}"/></clipPath>
<g clip-path="url(#land)" shape-rendering="crispEdges" stroke-width="1"><path d="${dots[0]}" stroke="#ffc4a8"/><path d="${dots[1]}" stroke="#ffdccc"/></g>
<path d="M489 305l-5 5" stroke="#e06040" stroke-dasharray="1 1"/><path d="M486 305h1.500M512 355.500h1.500M676 401.500h1.500M689 401.500h1.500" stroke="#622"/>
<g fill="none" stroke="#444" stroke-width=".9" stroke-linejoin="round"><path d="${d}"/>
<g transform="translate(290 460) scale(.33333)" stroke-width="3"><path d="M620 445L594 483L600 520L584 570L578 605M620 447L600 485L605 520L590 568L584 606M812 454L773 485L752 525L733 551L693 580L690 640L682 660L670 706M812 458L779 490L756 532L738 556L700 584L696 640L686 664L678 706M466 535L463 500L476 490M468 535L466 500M463 502L448 483L456 484M463 500L442 514L452 498"/><path d="M526 578l12 8M546 588l8 12M568 616l5 4M583 612l6 14" stroke-width="4"/></g></g>
<g fill="#a06b54">${clinics.map(p=>`<circle cx="${p[0].toFixed(1)}" cy="${p[1].toFixed(1)}" r="3.200"/>`).join('')}</g>`;
</script>
<script src="https://cdn.jsdelivr.net/npm/bootstrap@5.3.0/dist/js/bootstrap.bundle.min.js"></script>
</body>
</html>
